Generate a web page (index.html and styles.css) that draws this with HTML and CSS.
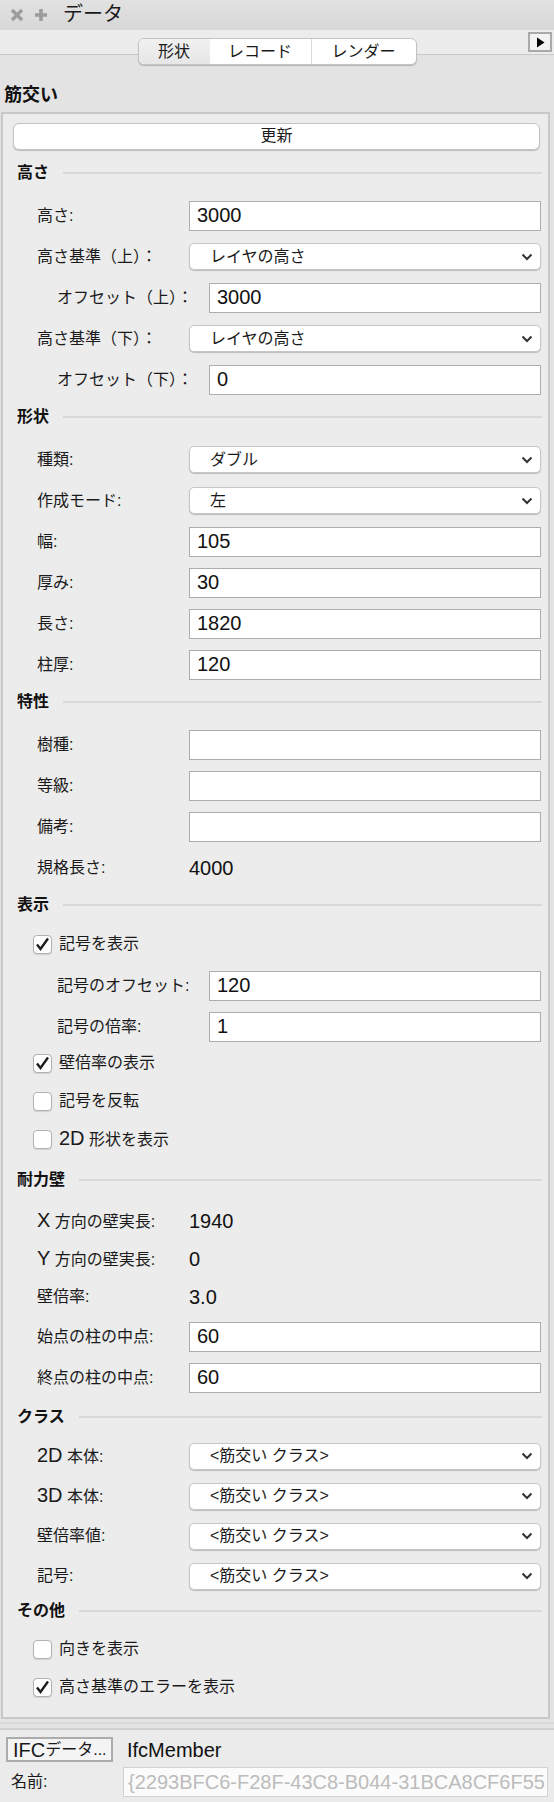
FILE: index.html
```html
<!DOCTYPE html>
<html lang="ja">
<head>
<meta charset="utf-8">
<title>データ</title>
<link rel="stylesheet" href="styles.css">
</head>
<body>
<div class="titlebar">
  <svg class="tb-icon tb-x" width="14" height="14" viewBox="0 0 14 14"><path d="M2 2L12 12M12 2L2 12" stroke="#9c9c9c" stroke-width="3.4"/></svg>
  <svg class="tb-icon tb-plus" width="14" height="14" viewBox="0 0 14 14"><path d="M7 1V13M1 7H13" stroke="#9c9c9c" stroke-width="3.6"/></svg>
  <span class="title">データ</span>
</div>
<div class="toolbar">
  <div></div>
  <div class="seg">
    <span class="seg-item seg-a is-active">形状</span>
    <span class="seg-item seg-b">レコード</span>
    <span class="seg-item seg-c">レンダー</span>
  </div>
  <div class="arrow-btn"><svg width="9" height="11" viewBox="0 0 9 11"><path d="M1 0.5L8.5 5.5L1 10.5Z" fill="#000"/></svg></div>
</div>
<h1 class="obj-title">筋交い</h1>
<div class="panel">
  <div class="update">更新</div>

  <section class="sec">
    <div class="sec-head"><span>高さ</span></div>
    <div class="rows pad5">
      <div class="row"><span class="lbl">高さ:</span><input class="field" value="3000"></div>
      <div class="row"><span class="lbl">高さ基準（上）：</span><div class="select"><span>レイヤの高さ</span><svg class="chev" width="12" height="8" viewBox="0 0 12 8"><path d="M1.5 1.5L6 6L10.5 1.5" fill="none" stroke="#333" stroke-width="2"/></svg></div></div>
      <div class="row sub"><span class="lbl">オフセット（上）：</span><input class="field" value="3000"></div>
      <div class="row"><span class="lbl">高さ基準（下）：</span><div class="select"><span>レイヤの高さ</span><svg class="chev" width="12" height="8" viewBox="0 0 12 8"><path d="M1.5 1.5L6 6L10.5 1.5" fill="none" stroke="#333" stroke-width="2"/></svg></div></div>
      <div class="row sub"><span class="lbl">オフセット（下）：</span><input class="field" value="0"></div>
    </div>
  </section>

  <section class="sec">
    <div class="sec-head"><span>形状</span></div>
    <div class="rows pad5">
      <div class="row"><span class="lbl">種類:</span><div class="select"><span>ダブル</span><svg class="chev" width="12" height="8" viewBox="0 0 12 8"><path d="M1.5 1.5L6 6L10.5 1.5" fill="none" stroke="#333" stroke-width="2"/></svg></div></div>
      <div class="row"><span class="lbl">作成モード:</span><div class="select"><span>左</span><svg class="chev" width="12" height="8" viewBox="0 0 12 8"><path d="M1.5 1.5L6 6L10.5 1.5" fill="none" stroke="#333" stroke-width="2"/></svg></div></div>
      <div class="row"><span class="lbl">幅:</span><input class="field" value="105"></div>
      <div class="row"><span class="lbl">厚み:</span><input class="field" value="30"></div>
      <div class="row"><span class="lbl">長さ:</span><input class="field" value="1820"></div>
      <div class="row"><span class="lbl">柱厚:</span><input class="field" value="120"></div>
    </div>
  </section>

  <section class="sec">
    <div class="sec-head"><span>特性</span></div>
    <div class="rows pad5">
      <div class="row"><span class="lbl">樹種:</span><input class="field" value=""></div>
      <div class="row"><span class="lbl">等級:</span><input class="field" value=""></div>
      <div class="row"><span class="lbl">備考:</span><input class="field" value=""></div>
      <div class="row"><span class="lbl">規格長さ:</span><span class="val">4000</span></div>
    </div>
  </section>

  <section class="sec">
    <div class="sec-head"><span>表示</span></div>
    <div class="rows disp">
      <div class="cbrow"><span class="cb"><svg width="15" height="14" viewBox="0 0 15 14"><path d="M2 7.5L5.5 12L13 1.5" fill="none" stroke="#1e1e1e" stroke-width="2.4"/></svg></span><span>記号を表示</span></div>
      <div class="subgroup">
        <div class="row sub"><span class="lbl">記号のオフセット:</span><input class="field" value="120"></div>
        <div class="row sub"><span class="lbl">記号の倍率:</span><input class="field" value="1"></div>
      </div>
      <div class="cbrow"><span class="cb"><svg width="15" height="14" viewBox="0 0 15 14"><path d="M2 7.5L5.5 12L13 1.5" fill="none" stroke="#1e1e1e" stroke-width="2.4"/></svg></span><span>壁倍率の表示</span></div>
      <div class="cbrow"><span class="cb"></span><span>記号を反転</span></div>
      <div class="cbrow"><span class="cb"></span><span><span class="lt">2D</span> 形状を表示</span></div>
    </div>
  </section>

  <section class="sec">
    <div class="sec-head"><span>耐力壁</span></div>
    <div class="rows wall">
      <div class="row static"><span class="lbl"><span class="lt">X</span> 方向の壁実長:</span><span class="val">1940</span></div>
      <div class="row static"><span class="lbl"><span class="lt">Y</span> 方向の壁実長:</span><span class="val">0</span></div>
      <div class="row static"><span class="lbl">壁倍率:</span><span class="val">3.0</span></div>
      <div class="row"><span class="lbl">始点の柱の中点:</span><input class="field" value="60"></div>
      <div class="row"><span class="lbl">終点の柱の中点:</span><input class="field" value="60"></div>
    </div>
  </section>

  <section class="sec">
    <div class="sec-head"><span>クラス</span></div>
    <div class="rows cls">
      <div class="row r40"><span class="lbl"><span class="lt">2D</span> 本体:</span><div class="select"><span>&lt;筋交い クラス&gt;</span><svg class="chev" width="12" height="8" viewBox="0 0 12 8"><path d="M1.5 1.5L6 6L10.5 1.5" fill="none" stroke="#333" stroke-width="2"/></svg></div></div>
      <div class="row r40"><span class="lbl"><span class="lt">3D</span> 本体:</span><div class="select"><span>&lt;筋交い クラス&gt;</span><svg class="chev" width="12" height="8" viewBox="0 0 12 8"><path d="M1.5 1.5L6 6L10.5 1.5" fill="none" stroke="#333" stroke-width="2"/></svg></div></div>
      <div class="row r40"><span class="lbl">壁倍率値:</span><div class="select"><span>&lt;筋交い クラス&gt;</span><svg class="chev" width="12" height="8" viewBox="0 0 12 8"><path d="M1.5 1.5L6 6L10.5 1.5" fill="none" stroke="#333" stroke-width="2"/></svg></div></div>
      <div class="row r40"><span class="lbl">記号:</span><div class="select"><span>&lt;筋交い クラス&gt;</span><svg class="chev" width="12" height="8" viewBox="0 0 12 8"><path d="M1.5 1.5L6 6L10.5 1.5" fill="none" stroke="#333" stroke-width="2"/></svg></div></div>
    </div>
  </section>

  <section class="sec">
    <div class="sec-head"><span>その他</span></div>
    <div class="rows other">
      <div class="cbrow"><span class="cb"></span><span>向きを表示</span></div>
      <div class="cbrow"><span class="cb"><svg width="15" height="14" viewBox="0 0 15 14"><path d="M2 7.5L5.5 12L13 1.5" fill="none" stroke="#1e1e1e" stroke-width="2.4"/></svg></span><span>高さ基準のエラーを表示</span></div>
    </div>
  </section>
</div>

<div class="footer">
  <div class="sep"></div>
  <div class="ifc-row">
    <div class="ifc-btn"><span class="lt">IFC</span>データ...</div>
    <span class="ifc-type">IfcMember</span>
  </div>
  <div class="name-row">
    <span class="name-lbl">名前:</span>
    <div class="name-field">{2293BFC6-F28F-43C8-B044-31BCA8CF6F55</div>
  </div>
</div>
</body>
</html>
```

FILE: styles.css
```css
* { box-sizing: border-box; }
html, body { margin: 0; padding: 0; }
body {
  width: 554px;
  height: 1802px;
  overflow: hidden;
  background: #e3e3e3;
  font-family: "Liberation Sans", "Noto Sans CJK JP", sans-serif;
  font-size: 16px;
  line-height: 20px;
  color: #1a1a1a;
}

/* title bar */
.titlebar {
  height: 30px;
  background: linear-gradient(#e2e2e2, #d7d7d7);
  display: flex;
  align-items: center;
  padding-left: 10px;
}
.tb-icon { display: block; }
.tb-x { margin-right: 10px; }
.tb-plus { margin-right: 15px; }
.title { font-size: 20px; line-height: 24px; color: #1a1a1a; margin-top: -2px; }

/* toolbar with segmented control */
.toolbar {
  height: 25px;
  background: #ececec;
  border-bottom: 1px solid #c9c9c9;
  display: grid;
  grid-template-columns: 1fr auto 1fr;
  align-items: start;
}
.seg {
  position: relative;
  z-index: 1;
  margin-top: 8px;
  height: 27px;
  display: flex;
  border: 1px solid #c4c4c4;
  border-radius: 6px;
  background: #fff;
  box-shadow: 0 1px 1px rgba(0,0,0,0.22);
  overflow: hidden;
}
.seg-item {
  display: flex;
  align-items: center;
  justify-content: center;
  font-size: 16px;
  color: #1a1a1a;
}
.seg-a { width: 71px; }
.seg-b { width: 102px; border-right: 1px solid #dcdcdc; }
.seg-c { width: 104px; }
.is-active { background: linear-gradient(#f1f1f1, #e6e6e6); }
.arrow-btn {
  justify-self: end;
  margin: 2px 2px 0 0;
  width: 24px;
  height: 20px;
  border: 2px solid #a9a9a9;
  background: #f2f2f2;
  display: flex;
  align-items: center;
  justify-content: center;
}
.arrow-btn svg { display: block; }

.obj-title {
  margin: 0;
  height: 57px;
  padding: 29px 0 0 4px;
  font-size: 18px;
  line-height: 22px;
  font-weight: 700;
  color: #111;
}

/* main panel */
.panel {
  margin: 0 4px 0 1px;
  border: 2px solid #c8c8c8;
  background: #ececec;
  padding-bottom: 11px;
}
.update {
  margin: 9px 8px 0 10px;
  height: 27px;
  border: 1px solid #c3c3c3;
  border-radius: 6px;
  background: #fff;
  box-shadow: 0 1px 1px rgba(0,0,0,0.2);
  display: flex;
  align-items: center;
  justify-content: center;
  font-size: 16px;
  padding-bottom: 2px;
}
.sec:first-of-type { margin-top: 6px; }
.sec-head {
  height: 34px;
  display: flex;
  align-items: center;
  padding: 0 6px 0 14px;
  font-weight: 700;
  font-size: 16px;
  color: #111;
}
.sec-head::after {
  content: "";
  flex: 1;
  height: 2px;
  background: #d8d8d8;
  margin-left: 14px;
}
.pad5 { padding-top: 5px; }
.disp { padding-top: 3px; padding-bottom: 5px; }
.wall { padding-top: 5px; padding-bottom: 2px; }
.cls { padding-top: 2px; margin-bottom: -2px; }
.other { padding-top: 2px; }

.row {
  height: 41px;
  display: grid;
  grid-template-columns: 152px 1fr;
  align-items: center;
  padding: 0 7px 0 34px;
}
.row.sub { padding-left: 54px; }
.row.static { height: 38px; }
.row.r40 { height: 40px; }
.lbl { white-space: nowrap; }
.lt { font-size: 20px; }
.val { font-size: 20px; color: #111; }

.field {
  display: block;
  width: 100%;
  height: 30px;
  margin: 0;
  border: 1px solid #adadad;
  border-radius: 0;
  background: #fff;
  padding: 0 7px;
  font-family: "Liberation Sans", sans-serif;
  font-size: 20px;
  color: #111;
  outline: none;
}
.select {
  height: 27px;
  border: 1px solid #c6c6c6;
  border-radius: 5px;
  background: #fff;
  box-shadow: 0 1px 1px rgba(0,0,0,0.2);
  display: flex;
  align-items: center;
  justify-content: space-between;
  padding: 0 7px 0 20px;
  font-size: 16px;
  color: #1a1a1a;
}
.chev { display: block; }

.subgroup { margin-top: 2px; margin-bottom: -3px; }
.cbrow {
  height: 38px;
  display: flex;
  align-items: center;
  gap: 7px;
  padding-left: 30px;
}
.cb {
  width: 19px;
  height: 19px;
  border: 1px solid #b2b2b2;
  border-radius: 4px;
  background: #fff;
  box-shadow: 0 1px 1px rgba(0,0,0,0.12);
  display: flex;
  align-items: center;
  justify-content: center;
  flex: none;
}
.cb svg { display: block; margin-top: -1px; }

/* footer */
.footer { background: #ebebeb; height: 83px; }
.sep {
  height: 11px;
  background: #e3e3e3;
  border-top: 3px solid #e3e3e3;
  border-bottom: 2px solid #d0d0d0;
  box-shadow: inset 0 2px 0 #d9d9d9;
}
.ifc-row {
  margin-top: 7px;
  display: flex;
  align-items: center;
  padding-left: 6px;
  gap: 14px;
}
.ifc-btn {
  width: 107px;
  height: 25px;
  border: 2px solid #acacac;
  background: #f4f4f4;
  display: flex;
  align-items: center;
  padding-left: 5px;
  white-space: nowrap;
  overflow: hidden;
  font-size: 16px;
}
.ifc-type { font-size: 20px; color: #111; }
.name-row {
  margin-top: 5px;
  display: flex;
  align-items: center;
  padding-left: 11px;
}
.name-lbl { width: 112px; }
.name-field {
  width: 425px;
  height: 30px;
  border: 1px solid #d2d2d2;
  background: #fbfbfb;
  padding-left: 4px;
  font-size: 20px;
  line-height: 28px;
  color: #bcbcbc;
  white-space: nowrap;
  overflow: hidden;
}
```
